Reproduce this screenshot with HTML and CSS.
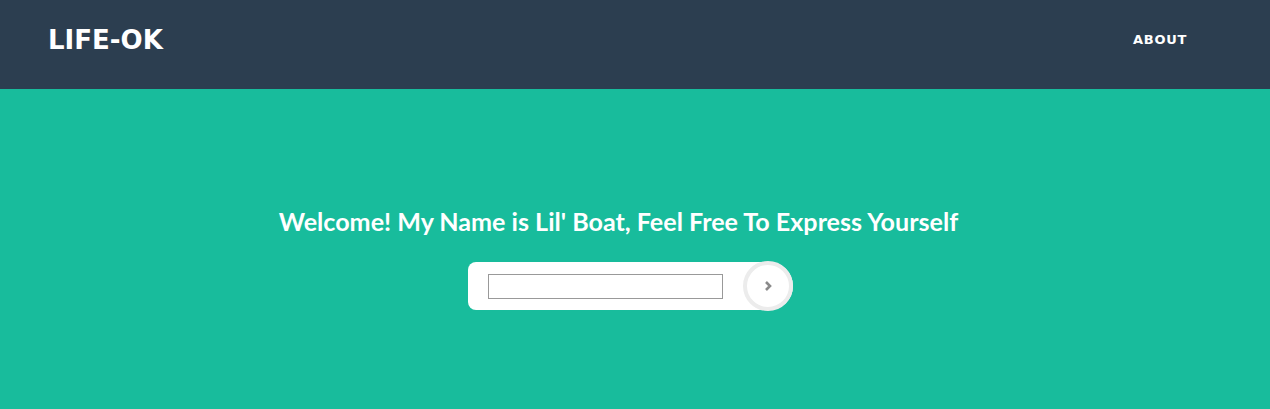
FILE: index.html
```html
<!DOCTYPE html>
<html lang="en">
<head>
  <meta charset="UTF-8">
  <title>LIFE-OK</title>
  <link rel="stylesheet" href="styles.css">
</head>
<body>
  <nav class="navbar">
    <a class="brand" href="#">LIFE-OK</a>
    <a class="nav-link" href="#">ABOUT</a>
  </nav>
  <header class="hero">
    <h1>Welcome! My Name is Lil' Boat, Feel Free To Express Yourself</h1>
    <form class="chat-box">
      <input type="text" class="chat-input">
      <button type="button" class="send">
        <svg width="10" height="12" viewBox="0 0 10 12"><path d="M3 2 L7 6 L3 10" fill="none" stroke="#8a8a8a" stroke-width="2.6"/></svg>
      </button>
    </form>
  </header>
</body>
</html>
```

FILE: styles.css
```css
body {
  margin: 0;
  font-family: Lato, "Open Sans", sans-serif;
  background-color: #18bc9c;
}

.navbar {
  height: 89px;
  background-color: #2c3e50;
  display: flex;
  align-items: center;
  justify-content: space-between;
  padding: 0 83px 0 48px;
}

.brand {
  color: #fff;
  text-decoration: none;
  font-family: "DejaVu Sans", sans-serif;
  font-weight: bold;
  font-size: 26px;
  letter-spacing: 0;
  margin-top: -10px;
}

.nav-link {
  color: #fff;
  text-decoration: none;
  font-family: "DejaVu Sans", sans-serif;
  font-weight: bold;
  font-size: 13px;
  letter-spacing: 0.7px;
  margin-top: -10px;
}

.hero {
  height: 320px;
  display: flex;
  flex-direction: column;
  align-items: center;
  padding-top: 116px;
  box-sizing: border-box;
}

h1 {
  margin: 0 33px 0 0;
  color: #fff;
  font-size: 25.1px;
  font-weight: bold;
  line-height: 32px;
}

.chat-box {
  margin: 25px 10px 0 0;
  width: 325px;
  height: 48px;
  background-color: #fff;
  border-radius: 8px 24px 24px 8px;
  display: flex;
  align-items: center;
  box-sizing: border-box;
  padding-left: 20px;
}

.chat-input {
  width: 235px;
  height: 25px;
  border: 1px solid #999;
  box-sizing: border-box;
  padding: 2px 4px;
  margin: 0;
}

.send {
  margin-left: auto;
  width: 50px;
  height: 50px;
  flex-shrink: 0;
  border-radius: 50%;
  border: 4px solid #ececec;
  background-color: #fff;
  display: flex;
  align-items: center;
  justify-content: center;
  padding: 0;
  cursor: pointer;
}
```
